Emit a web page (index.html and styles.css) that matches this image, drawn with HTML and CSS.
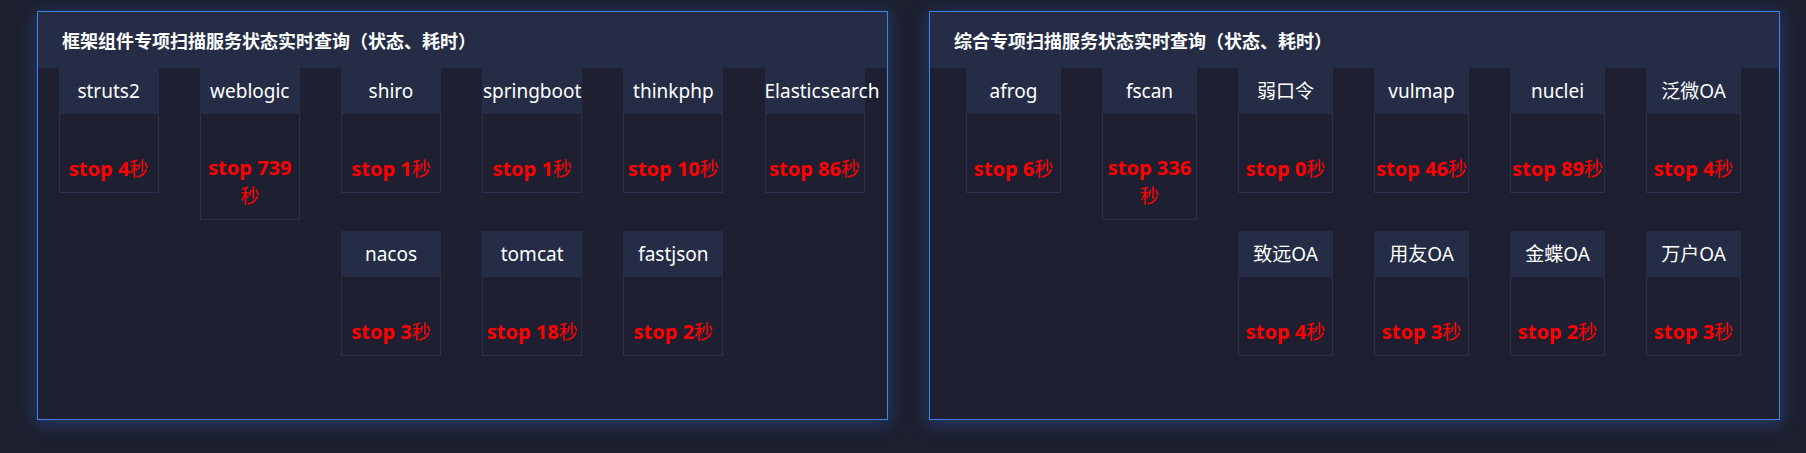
FILE: index.html
```html
<!DOCTYPE html>
<html lang="zh-CN">
<head>
<meta charset="utf-8">
<title>扫描服务状态</title>
<link rel="stylesheet" href="styles.css">
</head>
<body>
<div class="page">
  <section class="panel panel-frame">
    <h2 class="panel-title">框架组件专项扫描服务状态实时查询（状态、耗时）</h2>
    <div class="panel-body">
      <div class="card"><div class="card-head">struts2</div><div class="card-body">stop 4<span class="unit">秒</span></div></div>
      <div class="card"><div class="card-head">weblogic</div><div class="card-body">stop 739<span class="unit">秒</span></div></div>
      <div class="card"><div class="card-head">shiro</div><div class="card-body">stop 1<span class="unit">秒</span></div></div>
      <div class="card"><div class="card-head">springboot</div><div class="card-body">stop 1<span class="unit">秒</span></div></div>
      <div class="card"><div class="card-head">thinkphp</div><div class="card-body">stop 10<span class="unit">秒</span></div></div>
      <div class="card"><div class="card-head">Elasticsearch</div><div class="card-body">stop 86<span class="unit">秒</span></div></div>
      <div class="card"><div class="card-head">nacos</div><div class="card-body">stop 3<span class="unit">秒</span></div></div>
      <div class="card"><div class="card-head">tomcat</div><div class="card-body">stop 18<span class="unit">秒</span></div></div>
      <div class="card"><div class="card-head">fastjson</div><div class="card-body">stop 2<span class="unit">秒</span></div></div>
    </div>
  </section>
  <section class="panel panel-combo">
    <h2 class="panel-title">综合专项扫描服务状态实时查询（状态、耗时）</h2>
    <div class="panel-body">
      <div class="card"><div class="card-head">afrog</div><div class="card-body">stop 6<span class="unit">秒</span></div></div>
      <div class="card"><div class="card-head">fscan</div><div class="card-body">stop 336<span class="unit">秒</span></div></div>
      <div class="card"><div class="card-head">弱口令</div><div class="card-body">stop 0<span class="unit">秒</span></div></div>
      <div class="card"><div class="card-head">vulmap</div><div class="card-body">stop 46<span class="unit">秒</span></div></div>
      <div class="card"><div class="card-head">nuclei</div><div class="card-body">stop 89<span class="unit">秒</span></div></div>
      <div class="card"><div class="card-head">泛微OA</div><div class="card-body">stop 4<span class="unit">秒</span></div></div>
      <div class="card"><div class="card-head">致远OA</div><div class="card-body">stop 4<span class="unit">秒</span></div></div>
      <div class="card"><div class="card-head">用友OA</div><div class="card-body">stop 3<span class="unit">秒</span></div></div>
      <div class="card"><div class="card-head">金蝶OA</div><div class="card-body">stop 2<span class="unit">秒</span></div></div>
      <div class="card"><div class="card-head">万户OA</div><div class="card-body">stop 3<span class="unit">秒</span></div></div>
    </div>
  </section>
</div>
</body>
</html>
```
FILE: styles.css
```css
html, body {
  margin: 0;
  padding: 0;
  background: #1e2030;
  font-family: "Noto Sans", "Noto Sans CJK SC", sans-serif;
  color: #ffffff;
}

.page {
  display: flex;
  gap: 41px;
  padding: 11px 26px 0 37px;
  height: 453px;
  box-sizing: border-box;
  overflow: hidden;
}

.panel {
  width: 851px;
  height: 409px;
  box-sizing: border-box;
  flex: none;
  border: 1px solid #3e83e6;
  background: #1e2031;
  box-shadow: 0 3px 16px 1px rgba(44, 84, 168, 0.5);
  display: flex;
  flex-direction: column;
}

.panel-title {
  margin: 0;
  height: 56px;
  line-height: 56px;
  padding-left: 24px;
  background: #252c45;
  font-family: "Noto Sans CJK SC", sans-serif;
  font-size: 18px;
  font-weight: 700;
  color: #ffffff;
  flex: none;
}

.panel-body {
  flex: 1;
  overflow: hidden;
}

.panel-combo .panel-body {
  padding: 0 15.5px;
}

.card {
  float: left;
  width: 100px;
  margin: 0 20.6px 38px;
}

.panel-combo .card {
  width: 94.5px;
  margin: 0 20.75px 38px;
}

.card-head {
  height: 46px;
  line-height: 46px;
  background: #252c45;
  text-align: center;
  font-size: 19px;
  white-space: nowrap;
  color: #ffffff;
}

.card-body {
  border: 1px solid #2a3150;
  border-top: 0;
  padding: 40px 0 10px;
  text-align: center;
  color: #ff0000;
  font-size: 20px;
  font-weight: 700;
  line-height: 27px;
}

.unit {
  font-family: "Noto Sans CJK SC", sans-serif;
  font-weight: 400;
  font-size: 19px;
}
```
